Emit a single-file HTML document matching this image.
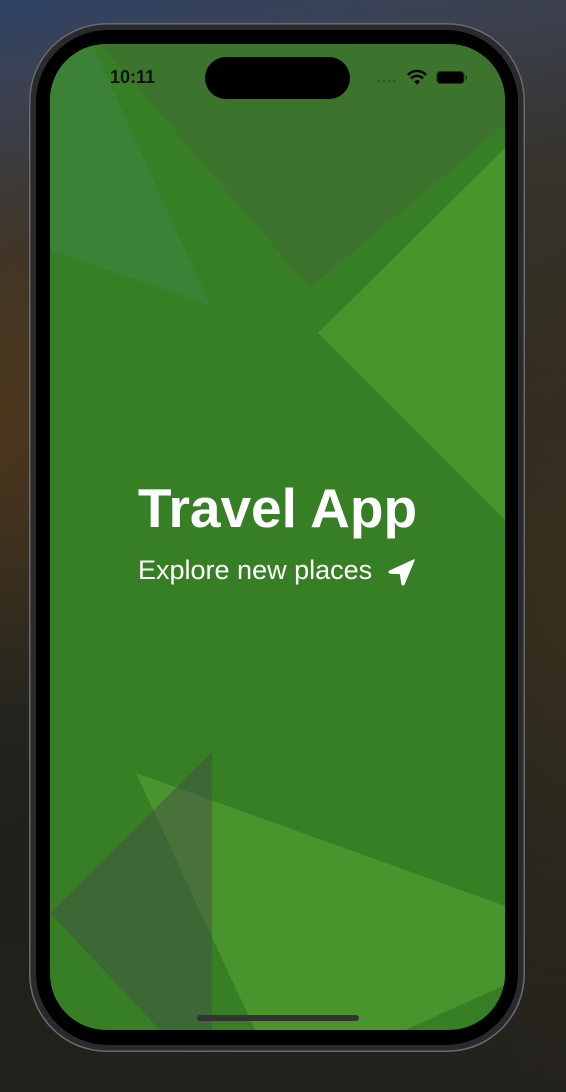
<!DOCTYPE html>
<html><head><meta charset="utf-8"><style>
html,body{margin:0;padding:0;width:566px;height:1092px;overflow:hidden;}
body{background:radial-gradient(ellipse 120px 300px at 10px 420px,rgba(90,60,25,0.7),rgba(0,0,0,0)),radial-gradient(ellipse 200px 500px at 566px 600px,rgba(70,55,30,0.6),rgba(0,0,0,0)),linear-gradient(170deg,#2f4366 0%,#3c4150 8%,#35332c 22%,#2c2a22 40%,#1f211d 70%,#24221d 100%);position:relative;font-family:"Liberation Sans",sans-serif;}
.phone{position:absolute;left:29px;top:23px;width:496px;height:1029px;border-radius:78px;background:#2a2a2c;box-shadow:inset 0 0 0 1.5px #6a6a6c;}
.bezel{position:absolute;left:36px;top:30px;width:482px;height:1015px;border-radius:72px;background:#000;}
.screen{position:absolute;left:50px;top:44px;width:455px;height:986px;border-radius:56px;overflow:hidden;background:#377f24;}
.screen svg{position:absolute;left:0;top:0;}
.island{position:absolute;left:205px;top:57px;width:145px;height:42px;border-radius:21px;background:#000;}
.time{position:absolute;left:110px;top:67px;font-size:18px;font-weight:bold;color:#111;}
.title{position:absolute;left:0;width:555px;text-align:center;top:476px;font-size:55px;font-weight:bold;color:#fff;}
.sub{position:absolute;left:138px;top:555px;font-size:27px;color:#fff;}
.home{position:absolute;left:197px;top:1015px;width:162px;height:6px;border-radius:3px;background:#333;}
</style></head><body>
<div class="phone"></div>
<div class="bezel"></div>
<div class="screen">
<svg width="455" height="986" viewBox="50 44 455 986">
<polygon points="92,44 210,305 50,250 50,44" fill="#3b8237"/>
<polygon points="100,44 505,44 505,125 310,288" fill="#3c742d"/>
<polygon points="318,333 505,148 505,520" fill="#4a942d"/>
<polygon points="136,773 505,906 505,985 405,1030 255,1030" fill="#4a942d"/>
<polygon points="212,752 50,913 160,1030 212,1030" fill="rgb(70,80,72)" fill-opacity="0.5"/>
</svg>
</div>
<div class="island"></div>
<div class="time">10:11</div>
<svg style="position:absolute;left:376px;top:68px" width="95" height="20">
<g fill="#2a5a20"><circle cx="3" cy="13" r="1.5"/><circle cx="8" cy="13" r="1.5"/><circle cx="13" cy="13" r="1.5"/><circle cx="18" cy="13" r="1.5"/></g>
<path d="M32 7 A12 12 0 0 1 50 7" stroke="#000" stroke-width="2.4" fill="none"/>
<path d="M35 10.5 A8 8 0 0 1 47 10.5" stroke="#000" stroke-width="2.4" fill="none"/>
<path d="M38 13.5 L41 16.5 L44 13.5 A4 4 0 0 0 38 13.5Z" fill="#000"/>
<rect x="61" y="3.5" width="27" height="12" rx="3.5" fill="#000" stroke="#1a3a14" stroke-width="1"/>
<rect x="89.5" y="7.5" width="1.5" height="4" fill="#1a3a14"/>
</svg>
<div class="title">Travel App</div>
<div class="sub">Explore new places</div>
<svg style="position:absolute;left:388px;top:559px" width="28" height="27" viewBox="0 0 28 27">
<path d="M26 1 L2 12 Q0 13.5 2.5 14 L12.5 14.5 L14 24.5 Q14.8 27 16 25 Z" fill="#fff" stroke="#fff" stroke-width="1.5" stroke-linejoin="round"/>
</svg>
<div class="home"></div>
</body></html>
